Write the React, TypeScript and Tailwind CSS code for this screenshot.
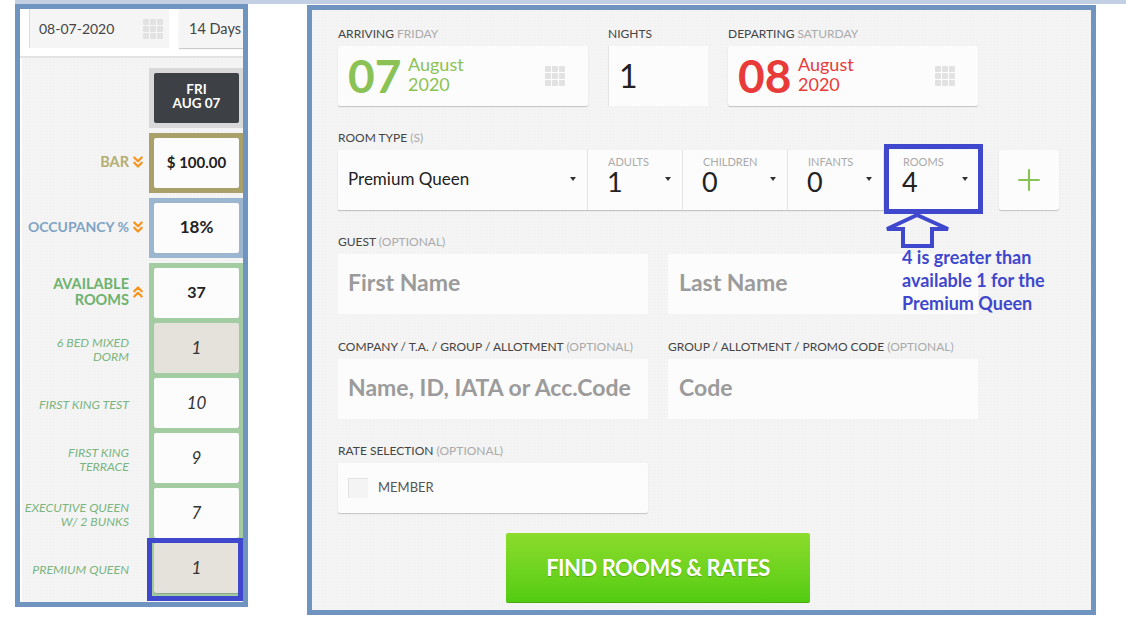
import { ChevronsDown, ChevronsUp, Plus } from 'lucide-react';

const font = 'font-["Lato","Noto_Sans",sans-serif]';
const texture = 'bg-[#f4f4f4] bg-[radial-gradient(#efefef_1px,transparent_1px)] bg-size-[3px_3px]';

function GridIcon() {
  return (
    <div className="grid grid-cols-3 gap-[1px] w-5 h-5 shrink-0">
      {[0, 1, 2, 3, 4, 5, 6, 7, 8].map((i) => (
        <div key={i} className="bg-[#e2e2e2] rounded-[1px]" />
      ))}
    </div>
  );
}

function Caret() {
  return <div className="w-0 h-0 border-x-[3px] border-x-transparent border-t-[4px] border-t-[#333]" />;
}

function Label({ main, sub }: { main: string; sub?: string }) {
  return (
    <div className="h-5 pt-px text-[12px] leading-[14px] text-[#444] uppercase whitespace-nowrap">
      {main} {sub && <span className="text-[#aaa]">{sub}</span>}
    </div>
  );
}

function DateCard({ day, month, year, color }: { day: string; month: string; year: string; color: string }) {
  return (
    <div className="w-[250px] h-[60px] bg-[#fcfcfc] rounded-[2px] shadow-[0_1px_1px_#c4c4c4] flex items-center pl-[10px] pr-[23px]">
      <div className={`text-[46px] leading-none font-bold w-[60px] ${color}`}>{day}</div>
      <div className={`text-[18px] leading-[20px] flex-1 pb-[5px] ${color}`}>
        <div>{month}</div>
        <div>{year}</div>
      </div>
      <GridIcon />
    </div>
  );
}

function TextCard({ text, last }: { text: string; last?: boolean }) {
  return (
    <div className={`w-[310px] h-[60px] bg-[#fcfcfc] flex items-center pb-[3px] text-[23px] font-bold text-[#9b9b9b] whitespace-nowrap ${last ? 'ml-5 pl-[11px]' : 'pl-[10px]'}`}>
      {text}
    </div>
  );
}

function Counter({ label, value, width }: { label: string; value: string; width: string }) {
  return (
    <div className={`${width} h-full border-r border-[#e4e4e4] pl-5 pr-[11px] pt-[5px] flex justify-between`}>
      <div>
        <div className="text-[11px] leading-[13px] text-[#aaa] uppercase">{label}</div>
        <div className="text-[27px] leading-[28px] -ml-px text-[#222]">{value}</div>
      </div>
      <div className="pt-[22px]">
        <Caret />
      </div>
    </div>
  );
}

function SideRow({ label, labelClass, cellClass, value, valueClass, icon, dark }: {
  label: React.ReactNode;
  labelClass: string;
  cellClass: string;
  value: React.ReactNode;
  valueClass?: string;
  icon?: React.ReactNode;
  dark?: boolean;
}) {
  return (
    <div className="flex h-[60px]">
      <div className={`flex-1 min-w-0 flex items-center justify-end text-right pb-[3px] ${labelClass}`}>{label}</div>
      <div className="w-5 shrink-0 flex items-center justify-center pr-[2px] pb-[2px] text-[#f7941e]">{icon}</div>
      <div className={`w-[94px] shrink-0 pt-[5px] pb-[5px] pl-[5px] pr-1 ${cellClass}`}>
        <div className={`h-[50px] rounded-[2px] pb-[2px] flex items-center justify-center text-center ${dark ? 'bg-[#3d4045] text-white text-[13.5px] leading-[14px] font-bold pb-[4px]' : 'bg-[#fcfcfc] text-[#222] text-[15px] font-bold'} ${valueClass ?? ''}`}>
          {value}
        </div>
      </div>
    </div>
  );
}

const roomRows = [
  { label: <>6 BED MIXED<br />DORM</>, value: '1', sold: true },
  { label: 'FIRST KING TEST', value: '10' },
  { label: <>FIRST KING<br />TERRACE</>, value: '9' },
  { label: <>EXECUTIVE QUEEN<br />W/ 2 BUNKS</>, value: '7' },
  { label: 'PREMIUM QUEEN', value: '1', sold: true, mark: true },
];

export default function App() {
  return (
    <div className={`w-[1126px] h-[637px] bg-white overflow-hidden ${font}`}>
      <div className="ml-[15px] h-1 bg-[#c3cfe3]" />
      <div className="flex items-start">
        <div className="ml-[15px] w-[233px] h-[603px] border-[5px] border-[#6f94c0] bg-white overflow-hidden">
          <div className="h-[49px] pl-[9px] flex gap-[10px] border-b-2 border-[#e3e3e3] overflow-hidden">
            <div className="w-[140px] h-[39px] shrink-0 bg-[#f5f5f5] border-l border-[#ddd] flex items-center justify-between pl-[9px] pr-[6px] text-[14px] text-[#444]">
              08-07-2020
              <GridIcon />
            </div>
            <div className="w-[80px] h-[39px] shrink-0 bg-[#f5f5f5] shadow-[0_1px_1px_#ccc] flex items-center pl-[10px] text-[14.5px] text-[#444] whitespace-nowrap">
              14 Days
            </div>
          </div>
          <div className={`ml-[2px] h-[544px] pt-[10px] flex flex-col gap-[5px] ${texture}`}>
            <SideRow
              label=""
              labelClass=""
              cellClass="bg-[#d9d9d9]"
              dark
              value={<span>FRI<br />AUG 07</span>}
            />
            <SideRow
              label="BAR"
              labelClass="text-[14.5px] font-bold text-[#b5ad72]"
              cellClass="bg-[#a9a06a]"
              value="$ 100.00"
              icon={<ChevronsDown size={24} strokeWidth={3} />}
            />
            <SideRow
              label="OCCUPANCY %"
              labelClass="text-[14px] font-bold text-[#7fa3c4] whitespace-nowrap"
              cellClass="bg-[#9db6cf]"
              value="18%"
              valueClass="text-[17px]"
              icon={<ChevronsDown size={24} strokeWidth={3} />}
            />
            <div>
              <div className="flex h-[55px]">
                <div className="flex-1 min-w-0 flex items-center justify-end text-right pt-[2px] text-[14.5px] leading-4 font-bold text-[#6db26d]">
                  <span>AVAILABLE<br />ROOMS</span>
                </div>
                <div className="w-5 shrink-0 flex items-center justify-center pr-[2px] pt-[3px] text-[#f7941e]">
                  <ChevronsUp size={24} strokeWidth={3} />
                </div>
                <div className="w-[94px] shrink-0 pt-[5px] pl-[5px] pr-1 bg-[#a3cca3]">
                  <div className="h-[50px] rounded-[2px] bg-[#fcfcfc] pb-[2px] flex items-center justify-center text-[16px] font-bold text-[#222]">37</div>
                </div>
              </div>
              {roomRows.map((row, i) => (
                <div key={i} className="flex h-[55px]">
                  <div className="flex-1 min-w-0 flex items-center justify-end text-right pt-[9px] text-[12.4px] leading-[14px] italic text-[#7ab57f] whitespace-nowrap">
                    <span>{row.label}</span>
                  </div>
                  <div className="w-5 shrink-0" />
                  <div className={`w-[94px] shrink-0 pt-[5px] pl-[5px] pr-1 bg-[#a3cca3] relative ${row.mark ? 'h-[60px] pb-[5px]' : ''}`}>
                    <div className={`h-[50px] rounded-[2px] shadow-[0_1px_1px_#8aa88a] flex items-center justify-center text-[17px] italic text-[#333] ${row.sold ? 'bg-[#e5e1db]' : 'bg-[#fcfcfc]'}`}>
                      {row.value}
                    </div>
                    {row.mark && (
                      <div className="absolute -left-[2px] top-0 w-[96px] h-[63px] border-[5px] border-[#3f48cc]" />
                    )}
                  </div>
                </div>
              ))}
            </div>
          </div>
        </div>

        <div className={`ml-[59px] mt-px w-[789px] h-[610px] border-[5px] border-[#6f94c0] pl-[26px] pt-4 ${texture}`}>
          <div className="flex">
            <div>
              <Label main="Arriving" sub="Friday" />
              <DateCard day="07" month="August" year="2020" color="text-[#8bc255]" />
            </div>
            <div className="ml-5">
              <Label main="Nights" />
              <div className="w-[100px] h-[60px] bg-[#fcfcfc] border-l border-[#e4e4e4] flex items-center pl-[10px] text-[32px] text-[#222]">1</div>
            </div>
            <div className="ml-5">
              <Label main="Departing" sub="Saturday" />
              <DateCard day="08" month="August" year="2020" color="text-[#e93a3a]" />
            </div>
          </div>

          <div className="mt-6">
            <Label main="Room Type" sub="(S)" />
            <div className="flex h-[60px]">
              <div className="w-[641px] h-[60px] flex bg-[#fcfcfc] shadow-[0_1px_1px_#c4c4c4]">
                <div className="w-[250px] h-full border-r border-[#e4e4e4] pl-[10px] pr-[11px] pb-[2px] flex items-center justify-between text-[17px] text-[#222]">
                  Premium Queen
                  <Caret />
                </div>
                <Counter label="Adults" value="1" width="w-[95px]" />
                <Counter label="Children" value="0" width="w-[105px]" />
                <Counter label="Infants" value="0" width="w-[96px]" />
                <div className="relative w-[95px] h-full pl-[19px] pr-[11px] pt-[5px] flex justify-between">
                  <div>
                    <div className="text-[11px] leading-[13px] text-[#aaa] uppercase">Rooms</div>
                    <div className="text-[27px] leading-[28px] -ml-px text-[#222]">4</div>
                  </div>
                  <div className="pt-[22px]">
                    <Caret />
                  </div>
                  <div className="absolute left-0 -top-[6px] w-[99px] h-[70px] border-[5px] border-[#3f48cc]" />
                  <svg className="absolute left-0 top-[63px]" width="68" height="36" viewBox="0 0 68 36">
                    <path d="M33 2 L3 16 L19 16 L19 33 L48 33 L48 16 L64 16 Z" fill="none" stroke="#3f48cc" strokeWidth="4" />
                  </svg>
                  <div className="absolute left-[18px] top-[96px] w-[170px] text-[18px] leading-[23px] font-bold text-[#3f48cc] z-10">
                    4 is greater than<br />available 1 for the<br />Premium Queen
                  </div>
                </div>
              </div>
              <div className="ml-5 w-[60px] h-[60px] bg-[#fcfcfc] rounded-[2px] shadow-[0_1px_1px_#c4c4c4] flex items-center justify-center text-[#8bc255]">
                <Plus size={34} strokeWidth={1.5} />
              </div>
            </div>
          </div>

          <div className="mt-6">
            <Label main="Guest" sub="(Optional)" />
            <div className="flex">
              <TextCard text="First Name" />
              <TextCard text="Last Name" last />
            </div>
          </div>

          <div className="mt-[25px] flex">
            <div>
              <Label main="Company / T.A. / Group / Allotment" sub="(Optional)" />
              <TextCard text="Name, ID, IATA or Acc.Code" />
            </div>
            <div className="ml-5">
              <Label main="Group / Allotment / Promo Code" sub="(Optional)" />
              <div className="w-[310px] h-[60px] bg-[#fcfcfc] flex items-center pl-[11px] pb-[3px] text-[23px] font-bold text-[#9b9b9b]">Code</div>
            </div>
          </div>

          <div className="mt-6">
            <Label main="Rate Selection" sub="(Optional)" />
            <div className="w-[310px] h-[50px] bg-[#fcfcfc] rounded-[2px] shadow-[0_1px_1px_#c4c4c4] flex items-center pl-[10px] gap-[10px]">
              <div className="w-5 h-5 bg-[#f4f4f4] border-l border-t border-[#e2e2e2]" />
              <span className="text-[13px] text-[#555]">MEMBER</span>
            </div>
          </div>

          <div className="mt-5 ml-[168px] w-[304px] h-[70px] rounded-[2px] bg-linear-to-b from-[#8bdc2c] to-[#52cc10] border-b border-[#46a90c] flex items-center justify-center text-[22px] tracking-[-0.5px] font-bold text-white [text-shadow:0_1px_1px_rgba(0,0,0,0.2)]">
            FIND ROOMS &amp; RATES
          </div>
        </div>
      </div>
    </div>
  );
}
